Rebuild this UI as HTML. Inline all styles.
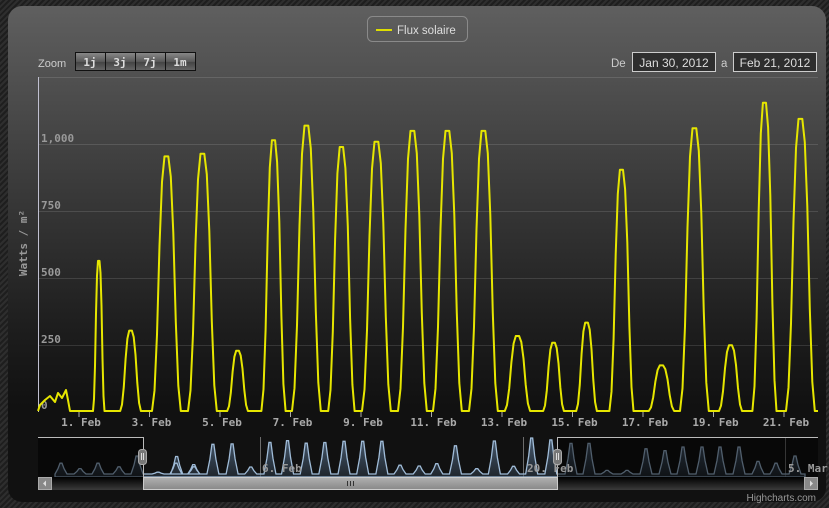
<!DOCTYPE html>
<html><head><meta charset="utf-8"><style>
html,body{margin:0;padding:0;width:829px;height:508px;overflow:hidden;background:#262626;
background-image:repeating-linear-gradient(135deg,#2e2e2e 0 2px,#1e1e1e 2px 4px);}
#card{position:absolute;left:8px;top:6px;width:818px;height:496px;border-radius:14px;
background:linear-gradient(180deg,#5f5f5f 0px,#3a3a3a 180px,#1c1c1c 330px,#111 400px,#111 496px);}
svg{position:absolute;left:0;top:0}
text{font-family:"DejaVu Sans Mono","Liberation Mono",monospace;}
</style></head><body>
<div id="card"></div>
<svg width="829" height="508" xmlns="http://www.w3.org/2000/svg">
<defs>
<linearGradient id="btn" x1="0" y1="0" x2="0" y2="1"><stop offset="0" stop-color="#8a8a8a"/><stop offset=".5" stop-color="#5a5a5a"/><stop offset=".55" stop-color="#444"/><stop offset="1" stop-color="#666"/></linearGradient>
<linearGradient id="trk" x1="0" y1="0" x2="0" y2="1"><stop offset="0" stop-color="#000"/><stop offset="1" stop-color="#3a3a3a"/></linearGradient>
<linearGradient id="thumb" x1="0" y1="0" x2="0" y2="1"><stop offset="0" stop-color="#b0b0b0"/><stop offset="1" stop-color="#888"/></linearGradient>
<linearGradient id="navf" x1="0" y1="0" x2="0" y2="1"><stop offset="0" stop-color="#6d8eb3" stop-opacity=".6"/><stop offset="1" stop-color="#2f3c4a" stop-opacity=".5"/></linearGradient>
</defs>
<rect x="367.5" y="16.5" width="100" height="25" rx="5" fill="none" stroke="#8a8a8a"/>
<line x1="376" y1="30" x2="392" y2="30" stroke="#dede00" stroke-width="2"/>
<text x="397" y="34" font-size="11.5" fill="#ddd" style="font-family:'Liberation Sans',sans-serif">Flux solaire</text>
<text x="38" y="67" font-size="11" fill="#ccc" style="font-family:'Liberation Sans',sans-serif">Zoom</text>
<g stroke="#111" stroke-width="1">
<rect x="75.5" y="52.5" width="30" height="18" fill="url(#btn)"/>
<rect x="105.5" y="52.5" width="30" height="18" fill="url(#btn)"/>
<rect x="135.5" y="52.5" width="30" height="18" fill="url(#btn)"/>
<rect x="165.5" y="52.5" width="30" height="18" fill="url(#btn)"/>
</g>
<g font-size="11" font-weight="bold" fill="#ddd" text-anchor="middle">
<text x="90" y="66">1j</text><text x="120" y="66">3j</text><text x="150" y="66">7j</text><text x="180" y="66">1m</text>
</g>
<text x="611" y="67" font-size="11.5" fill="#ccc" style="font-family:'Liberation Sans',sans-serif">De</text>
<rect x="632.5" y="52.5" width="83" height="19" fill="#2e2e2e" stroke="#ccc"/>
<text x="674" y="67" font-size="12" fill="#ddd" text-anchor="middle" style="font-family:'Liberation Sans',sans-serif">Jan 30, 2012</text>
<text x="721" y="67" font-size="11.5" fill="#ccc" style="font-family:'Liberation Sans',sans-serif">a</text>
<rect x="733.5" y="52.5" width="83" height="19" fill="#2e2e2e" stroke="#ccc"/>
<text x="775" y="67" font-size="12" fill="#ddd" text-anchor="middle" style="font-family:'Liberation Sans',sans-serif">Feb 21, 2012</text>
<g stroke="#fff" stroke-opacity=".12">
<line x1="38" y1="77.5" x2="818" y2="77.5"/>
<line x1="38" y1="144.5" x2="818" y2="144.5"/>
<line x1="38" y1="211.5" x2="818" y2="211.5"/>
<line x1="38" y1="278.5" x2="818" y2="278.5"/>
<line x1="38" y1="345.5" x2="818" y2="345.5"/>
</g>
<line x1="38.5" y1="77" x2="38.5" y2="412" stroke="#c0c0d0"/>
<g font-size="11" font-weight="bold" fill="#999">
<text x="41" y="142">1,000</text><text x="41" y="209">750</text><text x="41" y="276">500</text><text x="41" y="343">250</text><text x="41" y="409">0</text>
</g>
<text transform="translate(27,243) rotate(-90)" font-size="11" font-weight="bold" fill="#999" text-anchor="middle">Watts / m²</text>
<path id="main" fill="none" stroke="#e6e600" stroke-width="2" stroke-linejoin="round"/>
<g id="ticks" stroke="#aaa"></g>
<g id="xl" font-size="11" font-weight="bold" fill="#aaa" text-anchor="middle"></g>
<g stroke="#aaa" stroke-opacity=".6"><line x1="260.5" y1="437" x2="260.5" y2="477"/><line x1="523.5" y1="437" x2="523.5" y2="477"/><line x1="785.5" y1="437" x2="785.5" y2="477"/></g>
<path id="navA" fill="url(#navf)" stroke="#a0bcd8" stroke-width="1.3"/>
<rect x="38" y="437" width="105" height="40" fill="#000" fill-opacity=".5"/>
<rect x="557" y="437" width="261" height="40" fill="#000" fill-opacity=".5"/>
<path d="M38 437.5H143.5V477M557.5 477V437.5H818" fill="none" stroke="#bbb"/>
<g font-size="11" font-weight="bold" fill="#999"><text x="262" y="472">6. Feb</text><text x="527" y="472">20. Feb</text><text x="788" y="472">5. Mar</text></g>
<rect x="138.5" y="449.5" width="8" height="15" rx="3" fill="#777" stroke="#aaa"/>
<path d="M141.5 453v7M143.5 453v7" stroke="#ddd"/>
<rect x="553.5" y="449.5" width="8" height="15" rx="3" fill="#777" stroke="#aaa"/>
<path d="M556.5 453v7M558.5 453v7" stroke="#ddd"/>
<rect x="38" y="477" width="780" height="13" fill="url(#trk)"/>
<rect x="38.5" y="477.5" width="13" height="12" fill="#888" stroke="#aaa"/>
<path d="M43 483.5l3-3v6z" fill="#ddd"/>
<rect x="804.5" y="477.5" width="13" height="12" fill="#888" stroke="#aaa"/>
<path d="M813 483.5l-3-3v6z" fill="#ddd"/>
<rect x="143.5" y="477.5" width="414" height="12" fill="url(#thumb)" stroke="#ccc"/>
<path d="M347.5 481v5M350.5 481v5M353.5 481v5" stroke="#333"/>
<text x="816" y="501" font-size="10" fill="#999" text-anchor="end" style="font-family:'Liberation Sans',sans-serif">Highcharts.com</text>
</svg>
<script>
var B=411,k=0.268;
function Y(v){return B-v*k;}
var peaks=[[99,560,.5],[131,300,.9],[167,950,1.25],[203,960,1.25],[238,225,.9],[274,1010,1.05],[307,1065,1.25],[342,985,1.15],[377,1005,1.25],[413,1045,1.25],[448,1045,1.25],[484,1045,1.25],[518,280,1.1],[554,255,.9],[587,330,.9],[622,900,1.05],[662,170,1.1],[695,1055,1.25],[731,245,1],[765,1150,1.05],[801,1090,1.25]];
var d="M38 "+B+" L40 405 L45 400 L50 396 L55 402 L58 393 L62 398 L66 390 L68 400 L70 "+B;
peaks.forEach(function(p){var c=p[0],v=p[1],w=p[2];
 d+=" L"+(c-12*w).toFixed(1)+" "+B;
 var pts=[[-12,0],[-10,.08],[-8,.3],[-6,.65],[-4,.9],[-2,1],[1,1],[3,.92],[5,.7],[7,.35],[9,.1],[11,0]];
 pts.forEach(function(q){d+=" L"+(c+q[0]*w).toFixed(1)+" "+Y(v*q[1]).toFixed(1);});
});
d+=" L818 "+B;
document.getElementById('main').setAttribute('d',d);
var tk="",xl="",names=[1,3,5,7,9,11,13,15,17,19,21];
names.forEach(function(n){var x=79+(n-1)*35.25;tk+='<line x1="'+x.toFixed(1)+'" y1="412" x2="'+x.toFixed(1)+'" y2="417"/>';xl+='<text x="'+(x+2).toFixed(1)+'" y="426">'+n+'. Feb</text>';});
document.getElementById('ticks').innerHTML=tk;document.getElementById('xl').innerHTML=xl;
var nb=474,nh=36,np=[[61,.3],[80,.15],[98,.3],[119,.2],[137,.5],[158,.05],[176,.3],[194,.2]];
peaks.forEach(function(p){np.push([166+(p[0]-79)*18.79/35.25,p[1]/1150]);});
[[571,.85],[589,.85],[607,.1],[627,.1],[646,.7],[665,.65],[683,.75],[702,.75],[720,.75],[739,.75],[758,.35],[776,.3],[795,.5]].forEach(function(q){np.push(q)});
np.sort(function(a,b){return a[0]-b[0]});
var nd="M55 "+(nb+1)+" L55 "+nb;
np.forEach(function(q){var c=q[0],h=q[1]*nh;nd+=" L"+(c-6)+" "+nb+" L"+(c-3)+" "+(nb-h*.5).toFixed(1)+" L"+(c-1)+" "+(nb-h).toFixed(1)+" L"+(c+1)+" "+(nb-h).toFixed(1)+" L"+(c+3)+" "+(nb-h*.5).toFixed(1)+" L"+(c+6)+" "+nb;});
nd+=" L805 "+nb+" L805 "+(nb+3)+" L55 "+(nb+3)+"Z";
document.getElementById('navA').setAttribute('d',nd);
</script>
</body></html>
